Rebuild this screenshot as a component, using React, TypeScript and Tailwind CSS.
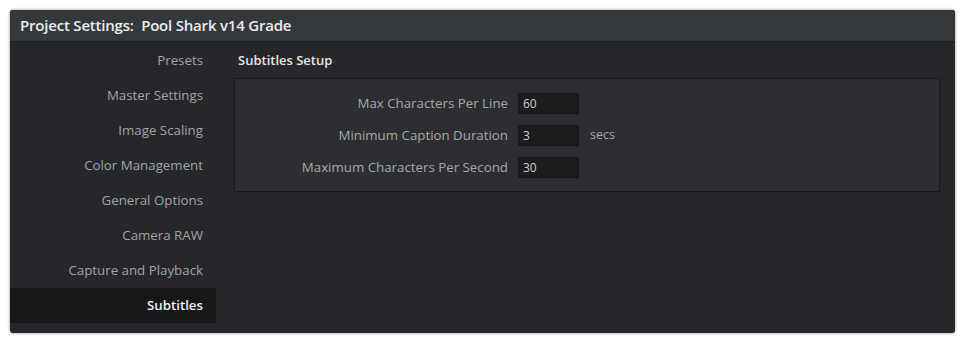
import React from 'react'

const sections = [
  'Presets',
  'Master Settings',
  'Image Scaling',
  'Color Management',
  'General Options',
  'Camera RAW',
  'Capture and Playback',
  'Subtitles',
]

const fields = [
  { label: 'Max Characters Per Line', value: '60', unit: '' },
  { label: 'Minimum Caption Duration', value: '3', unit: 'secs' },
  { label: 'Maximum Characters Per Second', value: '30', unit: '' },
]

const App: React.FC = () => {
  return (
    <div className="w-[962px] h-[337px] bg-white pt-[10px] pl-[10px] font-['Open_Sans',sans-serif]">
      <div className="w-[945px] h-[323px] rounded-[3px] overflow-hidden bg-[#25272a] shadow-[0_0_3px_rgba(0,0,0,0.5)] flex flex-col">
        <div className="h-[32px] shrink-0 bg-[#35383b] border-b border-[#1c1d1f] flex items-center pl-[10px]">
          <span className="text-[15px] font-semibold text-[#ececec] tracking-[-0.2px]">Project Settings:&nbsp; Pool Shark v14 Grade</span>
        </div>
        <div className="flex flex-1 pt-[1px]">
          <div className="w-[206px] shrink-0 flex flex-col">
            {sections.map((s) => (
              <div
                key={s}
                className={
                  s === 'Subtitles'
                    ? 'h-[35px] flex items-center justify-end pr-[13px] bg-[#161718] text-[13.3px] font-semibold text-[#f0f0f0]'
                    : 'h-[35px] flex items-center justify-end pr-[13px] text-[13.3px] text-[#a2a4a6]'
                }
              >
                {s}
              </div>
            ))}
          </div>
          <div className="flex-1 pl-[18px] pr-[15px]">
            <div className="h-[35px] flex items-center pl-[4px] text-[13px] font-semibold text-[#e6e6e6]">Subtitles Setup</div>
            <div className="h-[114px] bg-[#2c2e31] border border-[#18191b] flex flex-col pt-[14px] gap-[11px]">
              {fields.map((f) => (
                <div key={f.label} className="flex items-center h-[21px]">
                  <div className="w-[273px] text-right text-[13.3px] text-[#a6a8aa]">{f.label}</div>
                  <div className="ml-[10px] w-[61px] h-[21px] bg-[#1b1c1e] border border-[#151617] flex items-center pl-[4px] text-[12px] text-[#d0d0d0]">{f.value}</div>
                  {f.unit && <span className="ml-[11px] text-[12.5px] text-[#a6a8aa]">{f.unit}</span>}
                </div>
              ))}
            </div>
          </div>
        </div>
      </div>
    </div>
  )
}

export default App
